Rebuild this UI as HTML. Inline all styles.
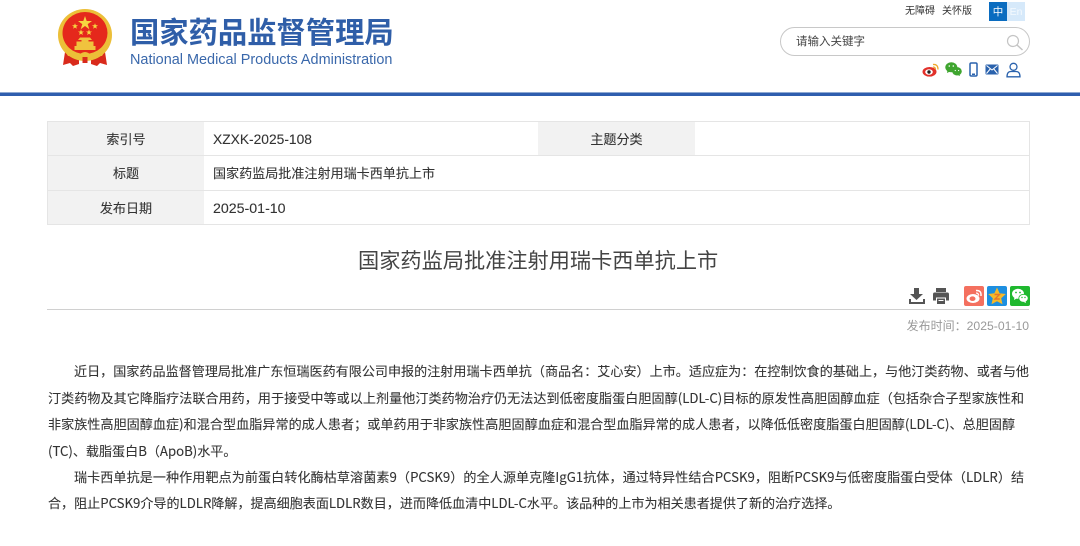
<!DOCTYPE html>
<html lang="zh-CN"><head><meta charset="utf-8"><title>国家药监局批准注射用瑞卡西单抗上市</title>
<style>
html,body{margin:0;padding:0;background:#fff}
body{width:1080px;height:546px;position:relative;overflow:hidden;font-family:"Liberation Sans","Noto Sans CJK SC",sans-serif;color:#333}
.a{position:absolute;white-space:nowrap}
.l{position:absolute;left:48px;width:981px;height:26px;line-height:26px;font-size:13.07px;white-space:nowrap;text-align:justify;text-align-last:justify;color:#333;-webkit-text-stroke:.1px #333}
.c{position:absolute;text-align:center;font-size:13.07px;line-height:20px;color:#333;-webkit-text-stroke:.1px #333}
.e{font-family:"Noto Sans CJK SC",sans-serif;font-size:13.2px}
.v{font-size:14.2px}
.t{font-size:13.07px;line-height:20px;color:#333;-webkit-text-stroke:.1px #333}
.bg{position:absolute;background:#f2f2f2}
.ln{position:absolute;background:#e5e5e5}
</style></head><body>

<!-- emblem -->
<svg class="a" style="left:56px;top:8px" width="58" height="60" viewBox="0 0 58 60">
<path d="M9 44 L7 57 L14 55 L17 58 L23 56 L23 48 Z" fill="#d92a1c"/>
<path d="M49 44 L51 57 L44 55 L41 58 L35 56 L35 48 Z" fill="#d92a1c"/>
<ellipse cx="29" cy="27" rx="27" ry="26" fill="#ecbf38"/>
<ellipse cx="29" cy="25" rx="22.500" ry="21" fill="#e5281c"/>
<path d="M29 8 L30.700 13 L36 13 L31.700 16.100 L33.300 21.200 L29 18 L24.700 21.200 L26.300 16.100 L22 13 L27.300 13Z" fill="#f6d640"/>
<g fill="#f6d640">
<path d="M19 15.200 L19.800 17.300 L22 17.300 L20.200 18.600 L20.900 20.800 L19 19.500 L17.100 20.800 L17.800 18.600 L16 17.300 L18.200 17.300Z"/>
<path d="M39 15.200 L39.800 17.300 L42 17.300 L40.200 18.600 L40.900 20.800 L39 19.500 L37.100 20.800 L37.800 18.600 L36 17.300 L38.200 17.300Z"/>
<path d="M25 21.400 L25.800 23.500 L28 23.500 L26.200 24.800 L26.900 27 L25 25.700 L23.100 27 L23.800 24.800 L22 23.500 L24.200 23.500Z"/>
<path d="M33 21.400 L33.800 23.500 L36 23.500 L34.200 24.800 L34.900 27 L33 25.700 L31.100 27 L31.800 24.800 L30 23.500 L32.200 23.500Z"/>
</g>
<path d="M24 29.500 H34 L36 32 H32.500 V33.500 H37.500 V38 H39.500 V42 H18.500 V38 H20.500 V33.500 H25.500 V32 H22 Z" fill="#f0c33e"/>
<path d="M7 40 Q17 42 23 47 Q26 44 29 44 Q32 44 35 47 Q41 42 51 40 L46 48 Q40 47 36 52 Q32 49 29 49 Q26 49 22 52 Q18 47 12 48Z" fill="#ecbf38"/>
<rect x="26.500" y="49" width="5" height="6" fill="#d92a1c"/>
</svg>

<div class="a" style="left:130px;top:11px;font-size:29.300px;line-height:40px;font-weight:700;color:#2f5ea8;font-family:'Noto Sans CJK SC',sans-serif">国家药品监督管理局</div>
<div class="a" style="left:130px;top:51px;font-size:14.450px;line-height:18px;color:#3a68ab">National Medical Products Administration</div>

<div class="a" style="left:905px;top:4px;font-size:10px;line-height:16px;color:#333">无障碍</div>
<div class="a" style="left:942px;top:4px;font-size:10px;line-height:16px;color:#333">关怀版</div>
<div class="a" style="left:989px;top:2px;width:18px;height:19px;background:#0a6cc0;color:#fff;font-size:10.500px;line-height:20px;text-align:center">中</div>
<div class="a" style="left:1007px;top:2px;width:18px;height:19px;background:#d6e9fa;color:#f4f9fe;font-size:10.500px;line-height:20px;text-align:center">En</div>

<div class="a" style="left:780px;top:27px;width:248px;height:27px;border:1px solid #c8c8c8;border-radius:15px;background:#fff"></div>
<div class="a" style="left:796px;top:34px;font-size:11.500px;line-height:17px;color:#444">请输入关键字</div>
<svg class="a" style="left:1006px;top:34px" width="18" height="17" viewBox="0 0 18 17" fill="none" stroke="#c4c4c4" stroke-width="1.200"><circle cx="7" cy="7" r="5.500"/><path d="M11 11 L16.500 16" stroke-width="1.500"/></svg>

<!-- top social icons -->
<svg class="a" style="left:922px;top:62px" width="18" height="15" viewBox="0 0 18 15">
<ellipse cx="7.500" cy="9.800" rx="7" ry="4.800" fill="#e2312b"/><ellipse cx="7" cy="10" rx="3.800" ry="2.800" fill="#fff"/><circle cx="7" cy="10" r="1.700" fill="#222"/>
<path d="M11 2.500 Q16 2 16 7.500" fill="none" stroke="#f0a92c" stroke-width="1.300"/><path d="M11 5 Q13.500 5 13.500 7.500" fill="none" stroke="#f0a92c" stroke-width="1.200"/></svg>
<svg class="a" style="left:945px;top:62px" width="17" height="15" viewBox="0 0 17 15" fill="#3fa52f">
<ellipse cx="6.300" cy="5.300" rx="6" ry="5"/><path d="M2.500 8 L2 11 L5 9.500Z"/><ellipse cx="12" cy="9.300" rx="4.800" ry="4.200"/><path d="M14.500 12 L15 14 L12.500 13Z"/>
<g fill="#fff"><circle cx="4.300" cy="4" r=".8"/><circle cx="8.300" cy="4" r=".8"/><circle cx="10.300" cy="8.500" r=".6"/><circle cx="13.600" cy="8.500" r=".6"/></g></svg>
<svg class="a" style="left:969px;top:62px" width="9" height="15" viewBox="0 0 9 15"><rect x="1" y="1" width="7" height="13" rx="1.300" fill="none" stroke="#2a62ad" stroke-width="1.500"/><rect x="3" y="11.500" width="3" height="1.500" fill="#2a62ad"/></svg>
<svg class="a" style="left:985px;top:64px" width="14" height="11" viewBox="0 0 14 11"><rect x=".5" y=".5" width="13" height="10" rx="1" fill="#2a62ad"/><path d="M1.500 1.500 L7 6 L12.500 1.500 M1.500 9.500 L5.200 5 M12.500 9.500 L8.800 5" fill="none" stroke="#fff" stroke-width="1"/></svg>
<svg class="a" style="left:1006px;top:62px" width="15" height="16" viewBox="0 0 15 16" fill="none" stroke="#2a62ad" stroke-width="1.300"><circle cx="7.500" cy="4.800" r="3.500"/><path d="M1 14.800 Q1 9.500 5 9.500 L10 9.500 Q14 9.500 14 14.800 Z"/></svg>

<!-- header rule -->
<div class="a" style="left:0;top:92px;width:1080px;height:1px;background:#8fa9d2"></div>
<div class="a" style="left:0;top:93px;width:1080px;height:3px;background:#2f5eae"></div>

<!-- table -->
<div class="bg" style="left:48px;top:122px;width:156px;height:102px"></div>
<div class="bg" style="left:538px;top:122px;width:157px;height:34px"></div>
<div class="ln" style="left:47px;top:121px;width:983px;height:1px"></div>
<div class="ln" style="left:47px;top:155px;width:983px;height:1px"></div>
<div class="ln" style="left:47px;top:190px;width:983px;height:1px"></div>
<div class="ln" style="left:47px;top:224px;width:983px;height:1px"></div>
<div class="ln" style="left:47px;top:121px;width:1px;height:104px"></div>
<div class="ln" style="left:1029px;top:121px;width:1px;height:104px"></div>
<div class="c" style="left:48px;width:156px;top:130px">索引号</div>
<div class="c" style="left:538px;width:157px;top:130px">主题分类</div>
<div class="c" style="left:48px;width:156px;top:164px">标题</div>
<div class="c" style="left:48px;width:156px;top:199px">发布日期</div>
<div class="a t" style="left:213px;top:130px"><span class="v" style="font-size:13.800px">XZXK-2025-108</span></div>
<div class="a t" style="left:213px;top:164px">国家药监局批准注射用瑞卡西单抗上市</div>
<div class="a t" style="left:213px;top:199px"><span class="v">2025-01-10</span></div>

<!-- title -->
<div class="a" style="left:358px;top:246px;font-size:21.200px;line-height:32px;color:#444">国家药监局批准注射用瑞卡西单抗上市</div>

<!-- tool icons -->
<svg class="a" style="left:908px;top:287px" width="18" height="18" viewBox="0 0 18 18" fill="#555"><path d="M6 1 H11 V7 H15 L8.500 13 L2 7 H6Z"/><path d="M1 12 H3 V15 H15 V12 H17 V17 H1Z"/></svg>
<svg class="a" style="left:932px;top:287px" width="18" height="18" viewBox="0 0 18 18" fill="#555"><rect x="4" y="1" width="10" height="4"/><path d="M2.500 5.500 H15.500 Q17 5.500 17 7.500 V13.500 H14 V10.500 H4 V13.500 H1 V7.500 Q1 5.500 2.500 5.500Z"/><path d="M5 11.500 H13 V17 H5Z"/><path d="M6.500 13 H11.500 V14 H6.500Z" fill="#fff"/></svg>

<svg class="a" style="left:964px;top:286px" width="20" height="20" viewBox="0 0 20 20"><rect width="20" height="20" rx="2" fill="#f4705f"/><ellipse cx="9" cy="12.500" rx="6.500" ry="4.500" fill="#fff"/><ellipse cx="8.500" cy="12.700" rx="3" ry="2.300" fill="#f4705f"/><path d="M12 4.500 Q17.500 4 17 10" fill="none" stroke="#fff" stroke-width="1.500"/><path d="M12 7 Q14.700 7 14.500 9.700" fill="none" stroke="#fff" stroke-width="1.300"/></svg>
<svg class="a" style="left:987px;top:286px" width="20" height="20" viewBox="0 0 20 20"><rect width="20" height="20" rx="2" fill="#1d8fe0"/><path d="M10 1.500 L12.600 7.300 L18.800 8 L14.200 12.200 L15.500 18.300 L10 15.200 L4.500 18.300 L5.800 12.200 L1.200 8 L7.400 7.300Z" fill="#f7b928"/><path d="M7.500 8.500 H12.500 L8 13 H12.800" fill="none" stroke="#e8762a" stroke-width="1.400"/></svg>
<svg class="a" style="left:1010px;top:286px" width="20" height="20" viewBox="0 0 20 20"><rect width="20" height="20" rx="2" fill="#1fb82f"/><ellipse cx="8" cy="7.800" rx="6" ry="5" fill="#fff"/><path d="M4.500 11 L4 14 L7 12.300Z" fill="#fff"/><ellipse cx="13.500" cy="12.300" rx="4.700" ry="4" fill="#fff" stroke="#1fb82f" stroke-width=".8"/><path d="M15.500 15 L16 17 L13.800 16Z" fill="#fff"/><g fill="#1fb82f"><circle cx="6" cy="6.500" r=".9"/><circle cx="10" cy="6.500" r=".9"/><circle cx="12" cy="11.500" r=".7"/><circle cx="15" cy="11.500" r=".7"/></g></svg>

<div class="a" style="left:47px;top:309px;width:982px;height:1px;background:#d0d0d0"></div>
<div class="a" style="right:51px;top:317px;font-size:12px;line-height:18px;color:#999">发布时间：<span style="font-size:12.200px">2025-01-10</span></div>

<!-- body -->
<div class="l" style="left:74px;width:955px;top:359px">近日，国家药品监督管理局批准广东恒瑞医药有限公司申报的注射用瑞卡西单抗（商品名：艾心安）上市。适应症为：在控制饮食的基础上，与他汀类药物、或者与他</div>
<div class="l" style="top:385px;width:976px">汀类药物及其它降脂疗法联合用药，用于接受中等或以上剂量他汀类药物治疗仍无法达到低密度脂蛋白胆固醇<span class="e">(LDL-C)</span>目标的原发性高胆固醇血症（包括杂合子型家族性和</div>
<div class="l" style="top:411px;width:967px">非家族性高胆固醇血症<span class="e">)</span>和混合型血脂异常的成人患者；或单药用于非家族性高胆固醇血症和混合型血脂异常的成人患者，以降低低密度脂蛋白胆固醇<span class="e">(LDL-C)</span>、总胆固醇</div>
<div class="l" style="top:438px;width:183px"><span class="e">(TC)</span>、载脂蛋白<span class="e">B</span>（<span class="e">ApoB)</span>水平。</div>
<div class="l" style="left:74px;width:950px;top:464px">瑞卡西单抗是一种作用靶点为前蛋白转化酶枯草溶菌素<span class="e">9</span>（<span class="e">PCSK9</span>）的全人源单克隆<span class="e">IgG1</span>抗体，通过特异性结合<span class="e">PCSK9</span>，阻断<span class="e">PCSK9</span>与低密度脂蛋白受体（<span class="e">LDLR</span>）结</div>
<div class="l" style="top:490px;width:789px">合，阻止<span class="e">PCSK9</span>介导的<span class="e">LDLR</span>降解，提高细胞表面<span class="e">LDLR</span>数目，进而降低血清中<span class="e">LDL-C</span>水平。该品种的上市为相关患者提供了新的治疗选择。</div>
</body></html>
